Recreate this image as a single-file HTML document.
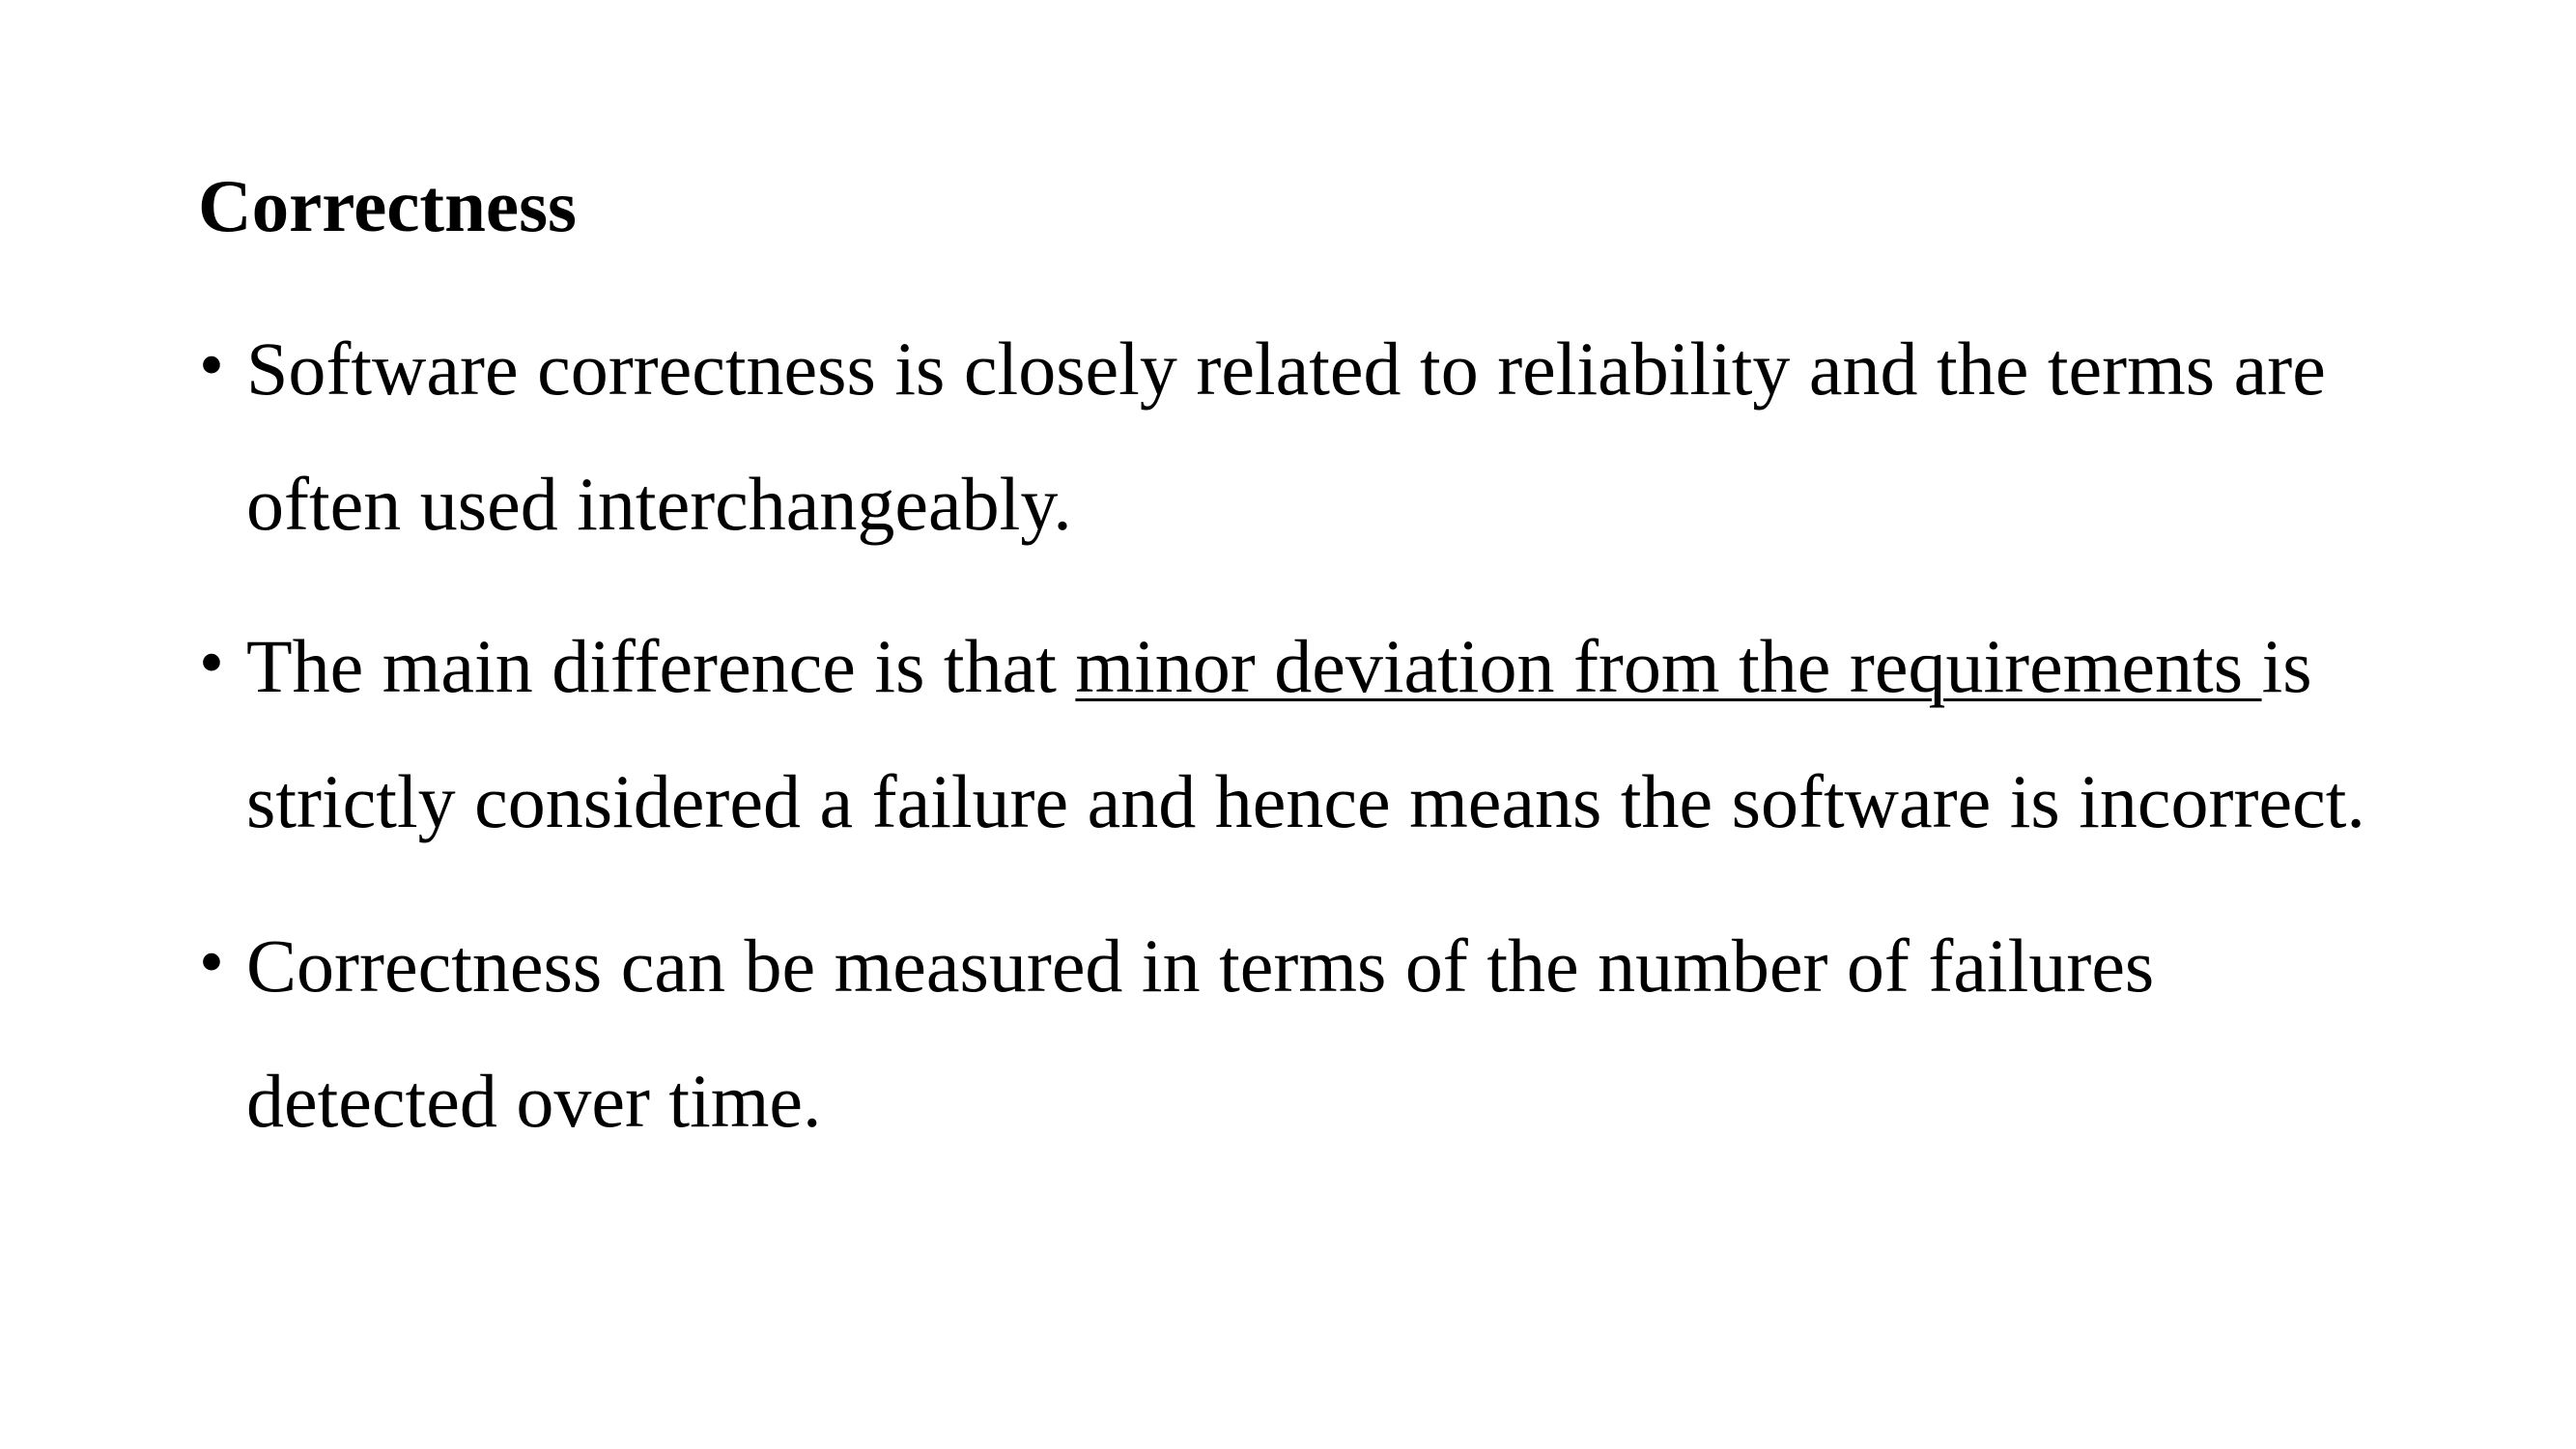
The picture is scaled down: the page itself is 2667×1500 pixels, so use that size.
<!DOCTYPE html>
<html><head><meta charset="utf-8"><style>
html,body{margin:0;padding:0;background:#fff;}
body{width:2667px;height:1500px;position:relative;overflow:hidden;font-family:"Liberation Serif","Times New Roman",serif;color:#000;}
.t{position:absolute;left:205px;top:163px;font-size:77px;line-height:100px;font-weight:bold;white-space:nowrap;}
.l{position:absolute;left:255px;font-size:78px;line-height:140px;white-space:nowrap;}
.b{position:absolute;left:206px;font-size:74px;line-height:140px;}
u{text-decoration-thickness:3px;text-underline-offset:7px;}
</style></head><body>
<div class="t">Correctness</div>
<div class="b" style="top:308px">•</div>
<div class="l" style="top:312px">Software correctness is closely related to reliability and the terms are</div>
<div class="l" style="top:452px">often used interchangeably.</div>
<div class="b" style="top:616px">•</div>
<div class="l" style="top:620px">The main difference is that <u>minor deviation from the requirements </u>is</div>
<div class="l" style="top:760px">strictly considered a failure and hence means the software is incorrect.</div>
<div class="b" style="top:926px">•</div>
<div class="l" style="top:930px">Correctness can be measured in terms of the number of failures</div>
<div class="l" style="top:1070px">detected over time.</div>
</body></html>
